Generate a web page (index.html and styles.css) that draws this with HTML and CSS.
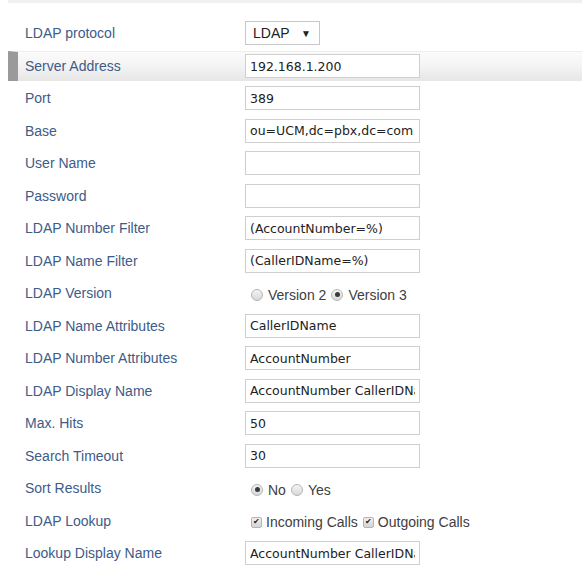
FILE: index.html
```html
<!DOCTYPE html>
<html lang="en">
<head>
    <meta charset="UTF-8">
    <title>LDAP Server Configuration</title>
    <link rel="stylesheet" href="styles.css">
</head>
<body>
    <div class="top-bar"></div>
    <div class="ldap-form">
        <div class="form-row">
            <label class="form-label">LDAP protocol</label>
            <div class="form-field">
                <div class="select-box">LDAP <span class="select-arrow">&#9660;</span></div>
            </div>
        </div>
        <div class="form-row active">
            <label class="form-label">Server Address</label>
            <div class="form-field"><input class="text-input" type="text" value="192.168.1.200"></div>
        </div>
        <div class="form-row">
            <label class="form-label">Port</label>
            <div class="form-field"><input class="text-input" type="text" value="389"></div>
        </div>
        <div class="form-row">
            <label class="form-label">Base</label>
            <div class="form-field"><input class="text-input" type="text" value="ou=UCM,dc=pbx,dc=com"></div>
        </div>
        <div class="form-row">
            <label class="form-label">User Name</label>
            <div class="form-field"><input class="text-input" type="text" value=""></div>
        </div>
        <div class="form-row">
            <label class="form-label">Password</label>
            <div class="form-field"><input class="text-input" type="text" value=""></div>
        </div>
        <div class="form-row">
            <label class="form-label">LDAP Number Filter</label>
            <div class="form-field"><input class="text-input" type="text" value="(AccountNumber=%)"></div>
        </div>
        <div class="form-row">
            <label class="form-label">LDAP Name Filter</label>
            <div class="form-field"><input class="text-input" type="text" value="(CallerIDName=%)"></div>
        </div>
        <div class="form-row">
            <label class="form-label">LDAP Version</label>
            <div class="form-field choice-group">
                <span class="radio"></span><span class="choice-text">Version 2</span>
                <span class="radio checked"></span><span class="choice-text">Version 3</span>
            </div>
        </div>
        <div class="form-row">
            <label class="form-label">LDAP Name Attributes</label>
            <div class="form-field"><input class="text-input" type="text" value="CallerIDName"></div>
        </div>
        <div class="form-row">
            <label class="form-label">LDAP Number Attributes</label>
            <div class="form-field"><input class="text-input" type="text" value="AccountNumber"></div>
        </div>
        <div class="form-row">
            <label class="form-label">LDAP Display Name</label>
            <div class="form-field"><input class="text-input" type="text" value="AccountNumber CallerIDName"></div>
        </div>
        <div class="form-row">
            <label class="form-label">Max. Hits</label>
            <div class="form-field"><input class="text-input" type="text" value="50"></div>
        </div>
        <div class="form-row">
            <label class="form-label">Search Timeout</label>
            <div class="form-field"><input class="text-input" type="text" value="30"></div>
        </div>
        <div class="form-row">
            <label class="form-label">Sort Results</label>
            <div class="form-field choice-group">
                <span class="radio checked"></span><span class="choice-text">No</span>
                <span class="radio"></span><span class="choice-text">Yes</span>
            </div>
        </div>
        <div class="form-row">
            <label class="form-label">LDAP Lookup</label>
            <div class="form-field choice-group">
                <span class="checkbox">&#10004;</span><span class="choice-text">Incoming Calls</span>
                <span class="checkbox">&#10004;</span><span class="choice-text">Outgoing Calls</span>
            </div>
        </div>
        <div class="form-row">
            <label class="form-label">Lookup Display Name</label>
            <div class="form-field"><input class="text-input" type="text" value="AccountNumber CallerIDName"></div>
        </div>
    </div>
</body>
</html>
```

FILE: styles.css
```css
* {
    margin: 0;
    padding: 0;
    box-sizing: border-box;
}

body {
    font-family: 'Liberation Sans', Arial, sans-serif;
    font-size: 14px;
    background-color: #ffffff;
    padding-left: 8px;
}

.top-bar {
    height: 3px;
    background-color: #f0f0f0;
}

.ldap-form {
    padding-top: 15px;
}

.form-row {
    display: flex;
    align-items: center;
    height: 30px;
    margin-bottom: 2.5px;
    border-left: 10px solid transparent;
}

.form-row.active {
    border-left-color: #9a9a9a;
    background: linear-gradient(to bottom, #fbfbfb 0%, #f3f3f3 50%, #e6e6e6 100%);
    border-top: 1px solid #eeeeee;
}

.form-label {
    width: 227px;
    padding-left: 7px;
    color: #3d5c88;
    font-size: 14px;
}

.form-field {
    display: flex;
    align-items: center;
}

.text-input {
    width: 175px;
    height: 24px;
    border: 1px solid #cfcfcf;
    background-color: #ffffff;
    padding: 0 4px;
    font-family: 'DejaVu Sans', Verdana, sans-serif;
    font-size: 12.5px;
    color: #222222;
    outline: none;
}

.select-box {
    width: 75px;
    height: 24px;
    border: 1px solid #c8c8c8;
    background-color: #ffffff;
    padding: 0 8px 0 7px;
    display: flex;
    align-items: center;
    justify-content: space-between;
    font-family: 'Liberation Sans', Arial, sans-serif;
    font-size: 14px;
    color: #222222;
}

.select-arrow {
    font-size: 10px;
    color: #222222;
}

/* radios and checkboxes sit a little lower than the labels */
.choice-group {
    padding-left: 6px;
    padding-top: 3px;
    color: #404040;
}

.choice-text {
    margin-right: 5px;
    font-size: 14px;
}

.radio {
    width: 12px;
    height: 12px;
    border: 1px solid #b5b5b5;
    border-radius: 50%;
    background: linear-gradient(to bottom, #f4f4f4, #d8d8d8);
    margin-right: 5px;
    display: inline-flex;
    align-items: center;
    justify-content: center;
}

.radio.checked::after {
    content: "";
    width: 5px;
    height: 5px;
    border-radius: 50%;
    background-color: #3a3a3a;
}

.checkbox {
    width: 11px;
    height: 11px;
    border: 1px solid #b5b5b5;
    border-radius: 2px;
    background: linear-gradient(to bottom, #f0f0f0, #d4d4d4);
    margin-right: 4px;
    display: inline-flex;
    align-items: center;
    justify-content: center;
    font-size: 8px;
    line-height: 1;
    color: #222222;
}
```
